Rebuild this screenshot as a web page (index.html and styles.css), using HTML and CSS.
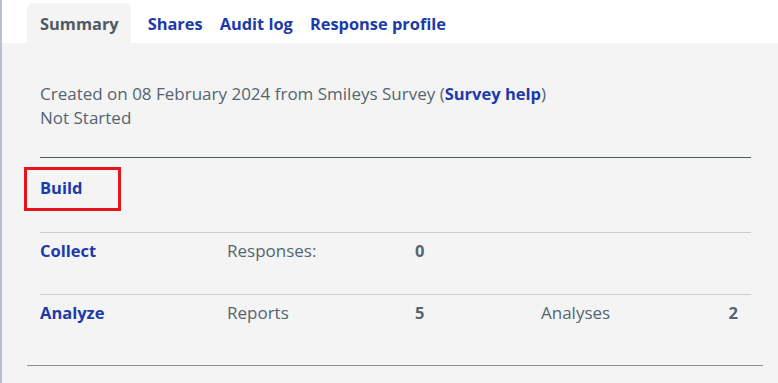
FILE: index.html
```html
<!DOCTYPE html>
<html lang="en">
<head>
    <meta charset="UTF-8">
    <title>Survey summary</title>
    <link rel="stylesheet" href="styles.css">
</head>
<body>
<div class="page">
    <div class="tabs">
        <ul>
            <li class="select"><a href="#">Summary</a></li>
            <li><a href="#">Shares</a></li>
            <li><a href="#">Audit log</a></li>
            <li><a href="#">Response profile</a></li>
        </ul>
    </div>
    <div class="panel">
        <div class="inner">
            <p class="info">Created on 08 February 2024 from Smileys Survey (<a href="#">Survey help</a>)</p>
            <p class="info">Not Started</p>
            <div class="steps">
                <div class="step build">
                    <a href="#" class="name">Build</a>
                    <span class="mark"></span>
                </div>
                <div class="step">
                    <a href="#" class="name">Collect</a>
                    <span class="label">Responses:</span>
                    <span class="num">0</span>
                    <span></span>
                    <span></span>
                </div>
                <div class="step">
                    <a href="#" class="name">Analyze</a>
                    <span class="label">Reports</span>
                    <span class="num">5</span>
                    <span class="label">Analyses</span>
                    <span class="num last">2</span>
                </div>
            </div>
        </div>
        <div class="foot"></div>
    </div>
</div>
</body>
</html>
```

FILE: styles.css
```css
* {
    margin: 0;
    padding: 0;
}

body {
    font-family: "Open Sans", Lato, sans-serif;
    font-size: 17px;
    color: #556470;
    background: #f4f4f4;
}

ul {
    list-style: none;
}

a {
    color: #1c3aa9;
    text-decoration: none;
    font-weight: bold;
    font-size: 16.5px;
}

.page {
    border-left: 2px solid #b8c0cf;
    height: 383px;
    box-sizing: border-box;
}

.tabs {
    background: #fff;
    height: 43px;
}

.tabs ul {
    display: flex;
    padding: 3px 0 0 25px;
    height: 40px;
}

.tabs li {
    display: flex;
    align-items: center;
}

.tabs li + li {
    margin-left: 17px;
}

.tabs li a {
    font-size: 16.4px;
}

.tabs li.select {
    background: #f4f4f4;
    border-radius: 6px 6px 0 0;
    padding: 0 12px 0 13px;
}

.tabs li.select a {
    color: #4f5b63;
}

.panel {
    padding: 0 15px 0 25px;
}

.inner {
    padding: 39px 12px 0 13px;
}

.info {
    line-height: 24px;
}

.steps {
    margin-top: 27px;
    border-top: 1px solid #4c5b62;
}

.step {
    display: grid;
    grid-template-columns: 187px 188px 126px 1fr auto;
    align-items: start;
    height: 62px;
    padding-top: 6px;
    box-sizing: border-box;
    border-top: 1px solid #cccccc;
    line-height: 24px;
}

.step:first-child {
    border-top: none;
    position: relative;
    height: 74px;
    padding-top: 18px;
}

.build .mark {
    position: absolute;
    left: -16px;
    top: 9px;
    width: 91px;
    height: 38px;
    border: 3px solid #e8141c;
}

.label {
    font-weight: normal;
}

.num {
    font-weight: bold;
    font-size: 16.5px;
}

.num.last {
    padding-right: 13px;
}

.foot {
    margin-top: 9px;
    border-top: 1px solid #8f8f8f;
}
```
